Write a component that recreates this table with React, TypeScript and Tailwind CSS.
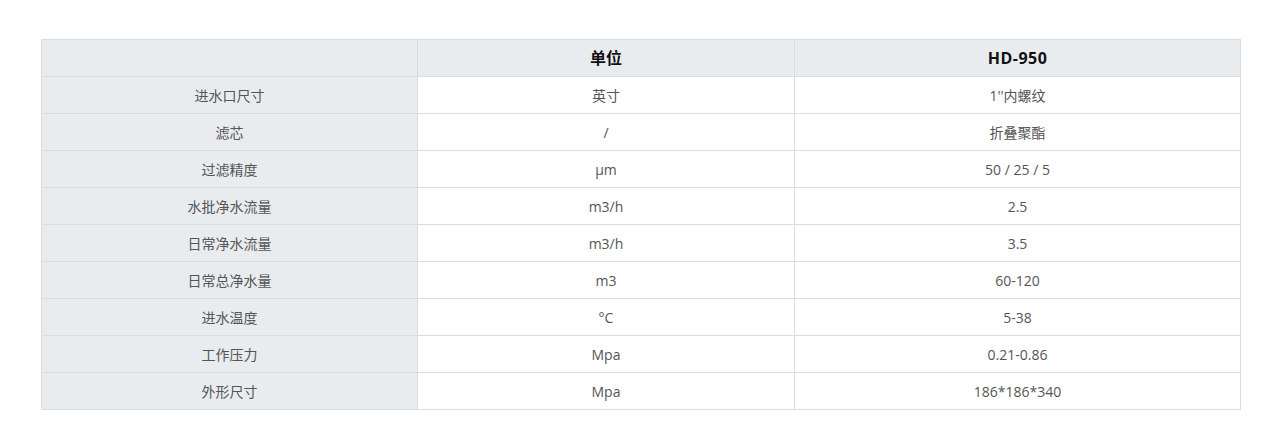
const rows: [string, string, string][] = [
  ["进水口尺寸", "英寸", "1''内螺纹"],
  ["滤芯", "/", "折叠聚酯"],
  ["过滤精度", "μm", "50 / 25 / 5"],
  ["水批净水流量", "m3/h", "2.5"],
  ["日常净水流量", "m3/h", "3.5"],
  ["日常总净水量", "m3", "60-120"],
  ["进水温度", "°C", "5-38"],
  ["工作压力", "Mpa", "0.21-0.86"],
  ["外形尺寸", "Mpa", "186*186*340"],
]

export default function App() {
  return (
    <div
      className="min-h-[432px] bg-white pt-[39px] pl-[41px]"
      style={{ fontFamily: '"Open Sans", "Noto Sans CJK SC", sans-serif' }}
    >
      <table className="w-[1200px] table-fixed border-collapse text-center text-[14px] text-[#555]">
        <colgroup>
          <col className="w-[376px]" />
          <col className="w-[377px]" />
          <col />
        </colgroup>
        <thead>
          <tr className="h-[37px] bg-[#e9ecef]">
            <th className="border border-[#dcdcdc]" />
            <th className="border border-[#dcdcdc] text-[16px] font-bold text-[#111]">单位</th>
            <th className="border border-[#dcdcdc] text-[16px] font-bold tracking-[0.5px] text-[#111]">HD-950</th>
          </tr>
        </thead>
        <tbody>
          {rows.map(([name, unit, value]) => (
            <tr key={name} className="h-[37px]">
              <td className="border border-[#dcdcdc] bg-[#e9ecef] p-0">{name}</td>
              <td className="border border-[#dcdcdc] p-0">{unit}</td>
              <td className="border border-[#dcdcdc] p-0">{value}</td>
            </tr>
          ))}
        </tbody>
      </table>
    </div>
  )
}
